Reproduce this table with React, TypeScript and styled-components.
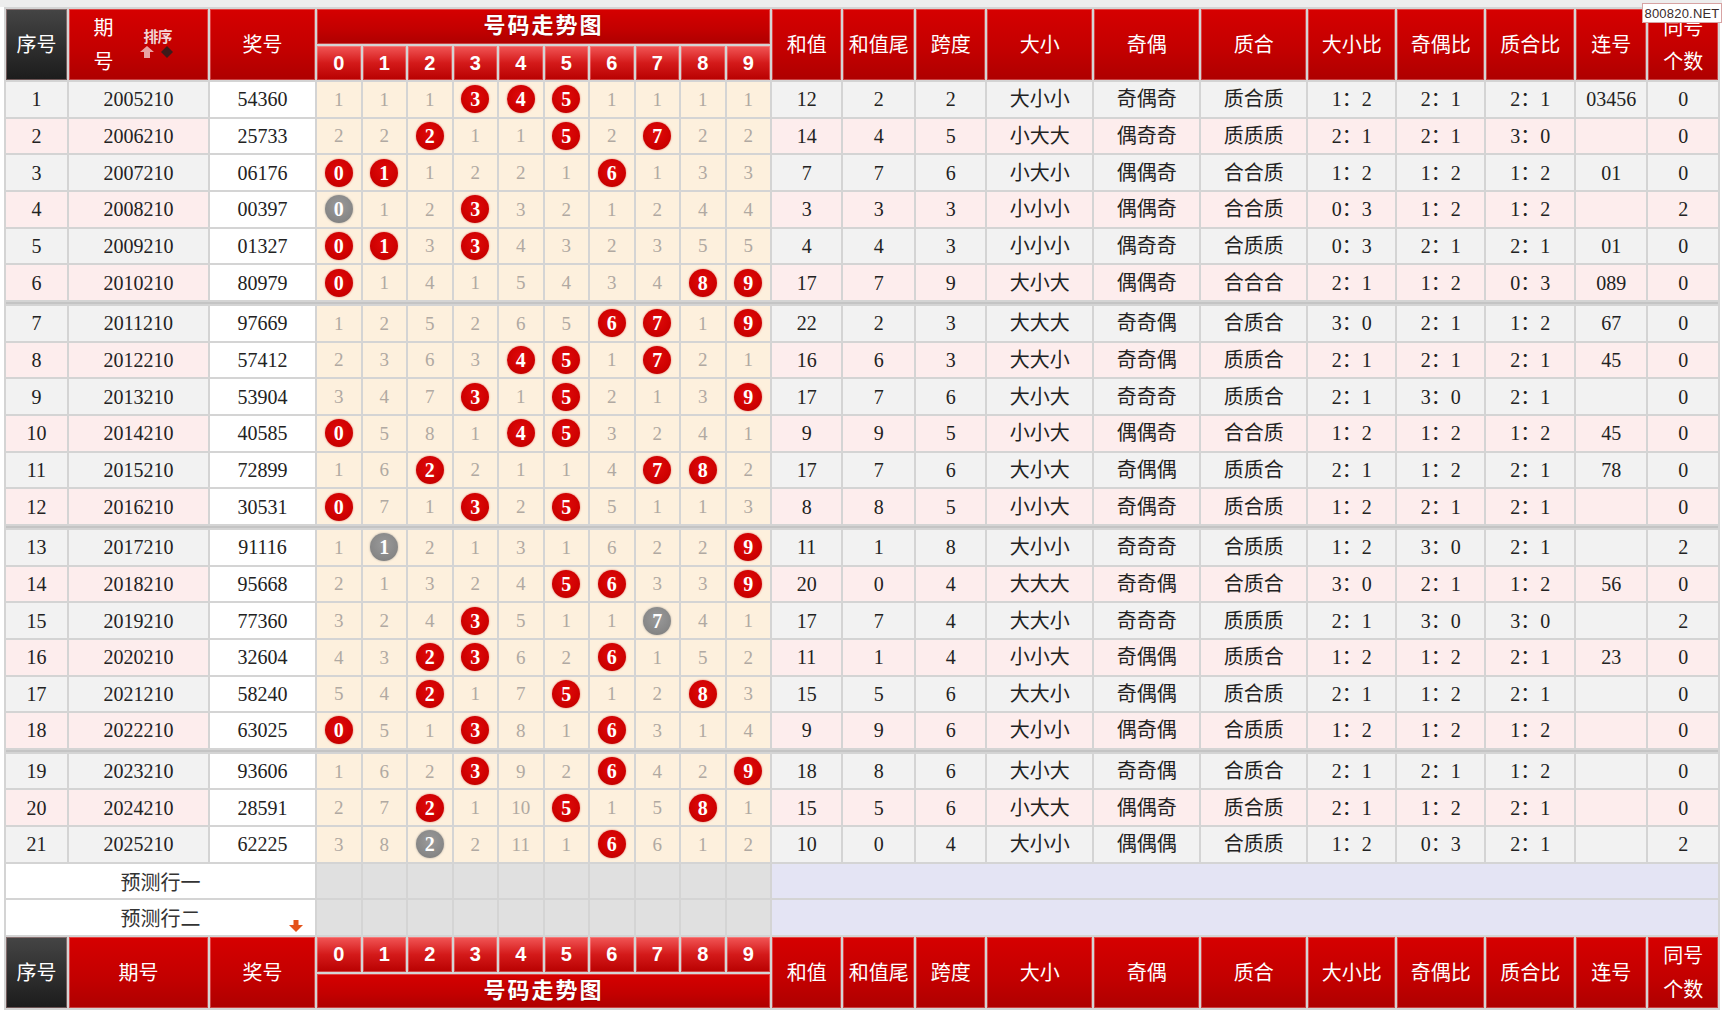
import React from 'react';
import styled, { createGlobalStyle, css } from 'styled-components';

const GlobalStyle = createGlobalStyle`
  html, body {
    margin: 0;
    padding: 0;
    background: #fff;
  }
  body {
    font-family: "Liberation Serif", "Noto Sans CJK SC", serif;
  }
`;

// 期号, 奖号, 和值, 和值尾, 跨度, 大小, 奇偶, 质合, 大小比, 奇偶比, 质合比, 连号, 同号个数
type Draw = [string, string, number, number, number, string, string, string, string, string, string, string, number];

const draws: Draw[] = [
  ['2005210', '54360', 12, 2, 2, '大小小', '奇偶奇', '质合质', '1：2', '2：1', '2：1', '03456', 0],
  ['2006210', '25733', 14, 4, 5, '小大大', '偶奇奇', '质质质', '2：1', '2：1', '3：0', '', 0],
  ['2007210', '06176', 7, 7, 6, '小大小', '偶偶奇', '合合质', '1：2', '1：2', '1：2', '01', 0],
  ['2008210', '00397', 3, 3, 3, '小小小', '偶偶奇', '合合质', '0：3', '1：2', '1：2', '', 2],
  ['2009210', '01327', 4, 4, 3, '小小小', '偶奇奇', '合质质', '0：3', '2：1', '2：1', '01', 0],
  ['2010210', '80979', 17, 7, 9, '大小大', '偶偶奇', '合合合', '2：1', '1：2', '0：3', '089', 0],
  ['2011210', '97669', 22, 2, 3, '大大大', '奇奇偶', '合质合', '3：0', '2：1', '1：2', '67', 0],
  ['2012210', '57412', 16, 6, 3, '大大小', '奇奇偶', '质质合', '2：1', '2：1', '2：1', '45', 0],
  ['2013210', '53904', 17, 7, 6, '大小大', '奇奇奇', '质质合', '2：1', '3：0', '2：1', '', 0],
  ['2014210', '40585', 9, 9, 5, '小小大', '偶偶奇', '合合质', '1：2', '1：2', '1：2', '45', 0],
  ['2015210', '72899', 17, 7, 6, '大小大', '奇偶偶', '质质合', '2：1', '1：2', '2：1', '78', 0],
  ['2016210', '30531', 8, 8, 5, '小小大', '奇偶奇', '质合质', '1：2', '2：1', '2：1', '', 0],
  ['2017210', '91116', 11, 1, 8, '大小小', '奇奇奇', '合质质', '1：2', '3：0', '2：1', '', 2],
  ['2018210', '95668', 20, 0, 4, '大大大', '奇奇偶', '合质合', '3：0', '2：1', '1：2', '56', 0],
  ['2019210', '77360', 17, 7, 4, '大大小', '奇奇奇', '质质质', '2：1', '3：0', '3：0', '', 2],
  ['2020210', '32604', 11, 1, 4, '小小大', '奇偶偶', '质质合', '1：2', '1：2', '2：1', '23', 0],
  ['2021210', '58240', 15, 5, 6, '大大小', '奇偶偶', '质合质', '2：1', '1：2', '2：1', '', 0],
  ['2022210', '63025', 9, 9, 6, '大小小', '偶奇偶', '合质质', '1：2', '1：2', '1：2', '', 0],
  ['2023210', '93606', 18, 8, 6, '大小大', '奇奇偶', '合质合', '2：1', '2：1', '1：2', '', 0],
  ['2024210', '28591', 15, 5, 6, '小大大', '偶偶奇', '质合质', '2：1', '1：2', '2：1', '', 0],
  ['2025210', '62225', 10, 0, 4, '大小小', '偶偶偶', '合质质', '1：2', '0：3', '2：1', '', 2],
];

const digits = [0, 1, 2, 3, 4, 5, 6, 7, 8, 9];
const statTitles = ['和值', '和值尾', '跨度', '大小', '奇偶', '质合', '大小比', '奇偶比', '质合比', '连号'];
const colWidths = [61, 139, 105, ...digits.map(() => 43.5), 69, 71, 69, 105, 105, 105, 87, 87, 88, 70, 70];

type TrendCell = { hit: true; dup: boolean } | { hit: false; miss: number };

// 遗漏值：按前三位开奖号码计算
const misses = digits.map(() => 0);
const trend: TrendCell[][] = draws.map(([, prize]) => {
  const front = prize.slice(0, 3).split('').map(Number);
  return digits.map((n): TrendCell => {
    const count = front.filter((x) => x === n).length;
    if (count > 0) {
      misses[n] = 0;
      return { hit: true, dup: count > 1 };
    }
    misses[n] += 1;
    return { hit: false, miss: misses[n] };
  });
});

const Page = styled.div`
  position: relative;
  padding: 0 2px 4px 4px;
`;

const TopBar = styled.div`
  height: 7px;
  margin-left: -4px;
  margin-right: -2px;
  background: #ededed;
`;

const SiteBadge = styled.div`
  position: absolute;
  top: 3px;
  right: 0;
  width: 78px;
  height: 18px;
  display: flex;
  align-items: center;
  justify-content: center;
  background: #fff;
  border: 1px solid #d7a3a3;
  font-family: "Liberation Sans", Arial, sans-serif;
  font-size: 13px;
  color: #3a2a2a;
  letter-spacing: 0.2px;
  z-index: 2;
`;

const Grid = styled.table`
  border-collapse: separate;
  border-spacing: 2px;
  table-layout: fixed;
  width: 1716px;
  background: #d4d4d4;
  font-size: 20px;
  color: #222;
`;

const Col = styled.col<{ $w: number }>`
  width: ${(p) => p.$w}px;
`;

const headBase = css`
  padding: 0;
  color: #fff;
  font-weight: normal;
  font-size: 20px;
  line-height: 1;
  text-align: center;
  vertical-align: middle;
  box-shadow: inset 0 0 0 1px rgba(255, 190, 190, 0.35);
`;

const RedHead = styled.th`
  ${headBase}
  background: linear-gradient(#d60000, #c20000 60%, #ae0000);
`;

const DarkHead = styled.th`
  ${headBase}
  background: linear-gradient(#454545, #2e2e2e 55%, #1c1c1c);
`;

const TitleHead = styled.th`
  ${headBase}
  height: 34.5px;
  font-weight: bold;
  font-size: 22px;
  letter-spacing: 2px;
  background: linear-gradient(#d60000, #c20000 60%, #ae0000);
  text-shadow: 0 0 2px rgba(90, 0, 0, 0.6);
`;

const DigitHead = styled.th`
  ${headBase}
  height: 34.5px;
  font-family: "Liberation Sans", Arial, sans-serif;
  font-weight: bold;
  font-size: 20px;
  background: linear-gradient(#f25656, #d41a1a 50%, #b80000);
`;

const TwoLine = styled.span`
  display: block;
  line-height: 34px;
`;

const PeriodHead = styled.div`
  display: flex;
  align-items: center;
  justify-content: center;
  gap: 26px;
`;

const PeriodLabel = styled.div`
  display: flex;
  flex-direction: column;
  line-height: 34px;
  margin-left: -8px;
`;

const SortBox = styled.div`
  display: flex;
  flex-direction: column;
  align-items: center;
  gap: 3px;
  margin-top: -4px;
`;

const SortText = styled.span`
  font-family: "Noto Sans CJK SC", sans-serif;
  font-size: 15px;
  font-weight: bold;
  line-height: 1;
  color: #f7d3d3;
  letter-spacing: -1px;
  text-shadow: 0 0 1px rgba(120, 0, 0, 0.6);
`;

const DataRow = styled.tr``;

type Tone = 'gray' | 'pink' | 'white' | 'cream';

const toneColors: Record<Tone, string> = {
  gray: '#f2f2f2',
  pink: '#fdeded',
  white: '#ffffff',
  cream: '#fdf0dd',
};

const Cell = styled.td<{ $tone: Tone }>`
  height: 34.67px;
  padding: 0;
  text-align: center;
  vertical-align: middle;
  line-height: 1;
  white-space: nowrap;
  background: ${(p) => toneColors[p.$tone]};
`;

const MissCell = styled(Cell)`
  color: #b0a9a2;
  font-size: 19px;
`;

const Ball = styled.span<{ $dup?: boolean }>`
  display: inline-flex;
  align-items: center;
  justify-content: center;
  width: 28px;
  height: 28px;
  border-radius: 50%;
  color: #fff;
  font-weight: bold;
  font-size: 20px;
  line-height: 1;
  background: ${(p) =>
    p.$dup
      ? 'radial-gradient(circle at 50% 40%, #9a9a9a, #878787 65%, #777)'
      : 'radial-gradient(circle at 50% 40%, #e00a0a, #cc0000 65%, #b00000)'};
  box-shadow: 0 0 2px ${(p) => (p.$dup ? 'rgba(90,90,90,0.5)' : 'rgba(200,0,0,0.55)')};
`;

const Divider = styled.td`
  height: 2px;
  padding: 0;
  background: #c4c4c4;
`;

const PredLabel = styled.td`
  position: relative;
  height: 34.67px;
  padding: 0;
  text-align: center;
  vertical-align: middle;
  background: #fff;
  color: #333;
  font-size: 20px;
`;

const PredDigit = styled.td`
  padding: 0;
  background: #e0e0e0;
`;

const PredFill = styled.td`
  padding: 0;
  background: #e4e4f4;
`;

const DownMark = styled.svg`
  position: absolute;
  right: 12px;
  bottom: 3px;
`;

function SortArrows() {
  return (
    <svg width="36" height="12" viewBox="0 0 36 12">
      <polygon points="7,0 14,6 10,6 10,12 4,12 4,6 0,6" fill="#e9a3a3" />
      <polygon points="27,0 33,6 27,12 21,6" fill="#3d1a1a" />
    </svg>
  );
}

function DrawRow({ draw, index }: { draw: Draw; index: number }) {
  const [period, prize, sum, tail, span, size, parity, prime, sizeRatio, parityRatio, primeRatio, run, same] = draw;
  const side: Tone = index % 2 === 0 ? 'gray' : 'pink';
  const stats = [sum, tail, span, size, parity, prime, sizeRatio, parityRatio, primeRatio, run, same];

  return (
    <DataRow>
      <Cell $tone={side}>{index + 1}</Cell>
      <Cell $tone={side}>{period}</Cell>
      <Cell $tone="white">{prize}</Cell>
      {trend[index].map((t, n) =>
        t.hit ? (
          <Cell key={n} $tone="cream">
            <Ball $dup={t.dup}>{n}</Ball>
          </Cell>
        ) : (
          <MissCell key={n} $tone="cream">
            {t.miss}
          </MissCell>
        )
      )}
      {stats.map((s, i) => (
        <Cell key={i} $tone={side}>
          {s}
        </Cell>
      ))}
    </DataRow>
  );
}

export default function App() {
  return (
    <Page>
      <GlobalStyle />
      <TopBar />
      <SiteBadge>800820.NET</SiteBadge>
      <Grid>
        <colgroup>
          {colWidths.map((w, i) => (
            <Col key={i} $w={w} />
          ))}
        </colgroup>
        <thead>
          <tr>
            <DarkHead rowSpan={2}>序号</DarkHead>
            <RedHead rowSpan={2}>
              <PeriodHead>
                <PeriodLabel>
                  <span>期</span>
                  <span>号</span>
                </PeriodLabel>
                <SortBox>
                  <SortText>排序</SortText>
                  <SortArrows />
                </SortBox>
              </PeriodHead>
            </RedHead>
            <RedHead rowSpan={2}>奖号</RedHead>
            <TitleHead colSpan={10}>号码走势图</TitleHead>
            {statTitles.map((t) => (
              <RedHead key={t} rowSpan={2}>
                {t}
              </RedHead>
            ))}
            <RedHead rowSpan={2}>
              <TwoLine>同号</TwoLine>
              <TwoLine>个数</TwoLine>
            </RedHead>
          </tr>
          <tr>
            {digits.map((d) => (
              <DigitHead key={d}>{d}</DigitHead>
            ))}
          </tr>
        </thead>
        <tbody>
          {draws.map((d, i) => (
            <React.Fragment key={d[0]}>
              <DrawRow draw={d} index={i} />
              {(i === 5 || i === 11 || i === 17) && (
                <tr>
                  <Divider colSpan={24} />
                </tr>
              )}
            </React.Fragment>
          ))}
          {['预测行一', '预测行二'].map((label, r) => (
            <tr key={label}>
              <PredLabel colSpan={3}>
                {label}
                {r === 1 && (
                  <DownMark width="14" height="12" viewBox="0 0 14 12">
                    <rect x="4.5" y="0" width="5" height="5" fill="#e4521b" />
                    <polygon points="0,5 14,5 7,12" fill="#e4521b" />
                  </DownMark>
                )}
              </PredLabel>
              {digits.map((d) => (
                <PredDigit key={d} />
              ))}
              <PredFill colSpan={11} />
            </tr>
          ))}
        </tbody>
        <tfoot>
          <tr>
            <DarkHead rowSpan={2}>序号</DarkHead>
            <RedHead rowSpan={2}>期号</RedHead>
            <RedHead rowSpan={2}>奖号</RedHead>
            {digits.map((d) => (
              <DigitHead key={d}>{d}</DigitHead>
            ))}
            {statTitles.map((t) => (
              <RedHead key={t} rowSpan={2}>
                {t}
              </RedHead>
            ))}
            <RedHead rowSpan={2}>
              <TwoLine>同号</TwoLine>
              <TwoLine>个数</TwoLine>
            </RedHead>
          </tr>
          <tr>
            <TitleHead colSpan={10}>号码走势图</TitleHead>
          </tr>
        </tfoot>
      </Grid>
    </Page>
  );
}
